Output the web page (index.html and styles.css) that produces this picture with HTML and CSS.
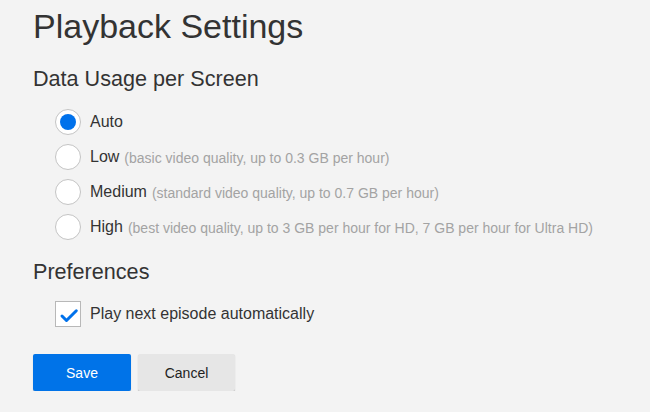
FILE: index.html
```html
<!DOCTYPE html>
<html>
<head>
<meta charset="utf-8">
<link rel="stylesheet" href="styles.css">
</head>
<body>
<div class="page">
  <h1 class="title">Playback Settings</h1>
  <h2 class="section">Data Usage per Screen</h2>
  <div class="options">
    <label class="option"><span class="radio checked"></span><span class="name">Auto</span></label>
    <label class="option"><span class="radio"></span><span class="name">Low</span><span class="desc">(basic video quality, up to 0.3 GB per hour)</span></label>
    <label class="option"><span class="radio"></span><span class="name">Medium</span><span class="desc">(standard video quality, up to 0.7 GB per hour)</span></label>
    <label class="option"><span class="radio"></span><span class="name">High</span><span class="desc">(best video quality, up to 3 GB per hour for HD, 7 GB per hour for Ultra HD)</span></label>
  </div>
  <h2 class="section prefs">Preferences</h2>
  <label class="check-row"><span class="checkbox"><svg viewBox="1 1 24 24" width="24" height="24"><path d="M7 15 L11.5 19.5 L21.3 9.8" fill="none" stroke="#0071eb" stroke-width="3" stroke-linecap="round" stroke-linejoin="round"/></svg></span><span class="name">Play next episode automatically</span></label>
  <div class="buttons">
    <button class="btn primary">Save</button>
    <button class="btn secondary">Cancel</button>
  </div>
</div>
</body>
</html>
```
FILE: styles.css
```css
html, body {
  margin: 0;
  padding: 0;
  background: #f3f3f3;
}
body {
  font-family: "Liberation Sans", Arial, sans-serif;
  color: #333;
}
.page {
  padding: 6px 0 0 33px;
}
.title {
  margin: 0;
  font-size: 34px;
  font-weight: 400;
  line-height: 40px;
  color: #333;
}
.section {
  margin: 20px 0 0 0;
  font-size: 21.6px;
  font-weight: 400;
  line-height: 26px;
  color: #333;
}
.options {
  display: flex;
  flex-direction: column;
  gap: 7px;
  margin: 16px 0 0 22px;
}
.option {
  display: flex;
  align-items: center;
  height: 28px;
}
.radio {
  box-sizing: border-box;
  width: 26px;
  height: 26px;
  border-radius: 50%;
  border: 1px solid #c4c4c4;
  background: #fff;
  display: flex;
  align-items: center;
  justify-content: center;
  margin-right: 9px;
  flex: none;
}
.radio.checked::after {
  content: "";
  width: 16px;
  height: 16px;
  border-radius: 50%;
  background: #0071eb;
}
.name {
  font-size: 16px;
  color: #333;
}
.desc {
  font-size: 14px;
  color: #a3a3a3;
  margin-left: 5px;
  margin-top: 1px;
}
.prefs {
  margin-top: 18px;
}
.check-row {
  display: flex;
  align-items: center;
  margin: 15px 0 0 22px;
  height: 28px;
}
.checkbox {
  box-sizing: border-box;
  width: 26px;
  height: 26px;
  border: 1px solid #b8b8b8;
  background: #fff;
  margin-right: 9px;
  flex: none;
}
.checkbox svg {
  display: block;
}
.buttons {
  display: flex;
  gap: 7px;
  margin-top: 26px;
}
.btn {
  width: 98px;
  height: 37px;
  border: none;
  border-radius: 2px;
  font-family: "Liberation Sans", Arial, sans-serif;
  font-size: 14px;
  cursor: pointer;
  padding: 0;
}
.primary {
  background: #0073e8;
  color: #fff;
  box-shadow: 0 1px 1px rgba(0,0,0,0.2);
}
.secondary {
  width: 97px;
  background: #e6e6e6;
  color: #222;
  box-shadow: 0 1px 1px rgba(0,0,0,0.25);
}
```
